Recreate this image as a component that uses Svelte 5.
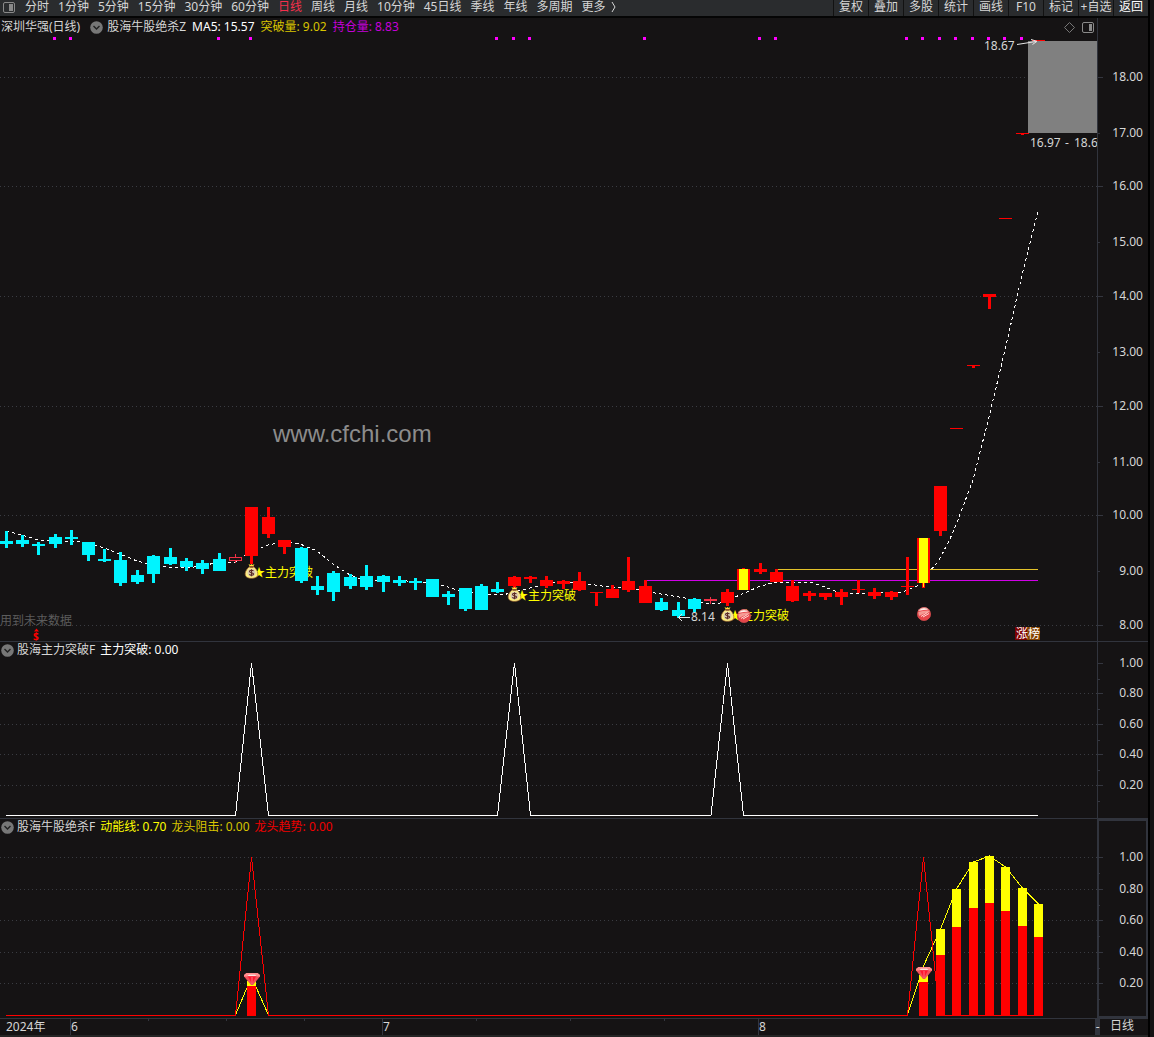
<script>
  const periods = [
    "分时", "1分钟", "5分钟", "15分钟", "30分钟", "60分钟", "日线", "周线",
    "月线", "10分钟", "45日线", "季线", "年线", "多周期", "更多",
  ];
  const tools = ["复权", "叠加", "多股", "统计", "画线", "F10", "标记", "+自选", "返回"];

  let period = $state("日线");

  // kind, body top, body bottom, wick top, wick bottom
  // c = cyan, r = red, y = breakout, h = hollow, x = thin cross
  const candles = [
    ["c", 541, 544, 531, 548], ["c", 540, 544, 535, 547],
    ["c", 544, 546, 542, 555], ["c", 537, 544, 534, 548],
    ["c", 537, 539, 530, 545], ["c", 542, 555, 542, 561],
    ["c", 559, 561, 549, 562], ["c", 560, 583, 552, 586],
    ["c", 575, 582, 570, 584], ["c", 556, 574, 555, 583],
    ["c", 557, 564, 548, 565], ["c", 561, 567, 558, 571],
    ["c", 563, 569, 560, 574], ["c", 559, 571, 553, 571],
    ["h", 557, 561, 554, 563], ["r", 507, 556, 507, 564],
    ["r", 517, 534, 507, 538], ["r", 540, 547, 540, 554],
    ["c", 548, 581, 547, 583], ["c", 586, 590, 576, 595],
    ["c", 573, 592, 571, 601], ["c", 577, 586, 574, 589],
    ["c", 576, 587, 565, 590], ["c", 576, 582, 575, 592],
    ["c", 580, 583, 576, 586], ["c", 581, 583, 578, 590],
    ["c", 579, 597, 579, 597], ["c", 594, 597, 591, 605],
    ["c", 588, 609, 588, 611], ["c", 586, 610, 584, 610],
    ["c", 589, 592, 582, 593], ["r", 577, 586, 576, 590],
    ["r", 577, 579, 576, 583], ["r", 580, 586, 576, 588],
    ["r", 581, 584, 580, 589], ["r", 581, 590, 572, 591],
    ["r", 592, 593, 592, 606], ["r", 589, 598, 585, 598],
    ["r", 581, 590, 557, 592], ["r", 586, 603, 580, 603],
    ["c", 602, 610, 598, 611], ["c", 610, 616, 602, 618],
    ["c", 599, 609, 598, 612], ["x", 599, 601, 597, 604],
    ["r", 592, 603, 589, 606], ["y", 569, 590, 568, 590],
    ["r", 569, 572, 563, 574], ["r", 572, 582, 569, 582],
    ["r", 586, 601, 580, 602], ["r", 593, 596, 591, 601],
    ["r", 593, 597, 593, 600], ["r", 592, 597, 589, 605],
    ["r", 589, 590, 580, 593], ["r", 592, 596, 588, 599],
    ["r", 592, 597, 591, 600], ["r", 586, 587, 557, 595],
    ["y", 538, 583, 538, 588], ["r", 486, 531, 486, 536],
    ["r", 428, 429, 428, 429], ["r", 365, 366, 365, 368],
    ["r", 294, 297, 294, 309], ["r", 218, 219, 218, 219],
    ["r", 133, 134, 133, 135], ["r", 40, 41, 40, 41],
  ];

  const ma5 =
    "6,531 22,535 38,540 55,541 71,541 88,543 104,548 120,554 137,561 153,565 " +
    "169,567 186,568 202,566 219,562 235,562 251,552 268,545 284,542 300,544 317,551 " +
    "333,564 350,575 366,581 399,580 415,582 432,583 448,587 464,592 481,594 503,595 " +
    "521,590 535,587 553,583 575,582 587,584 610,587 635,589 655,593 685,598 705,603 " +
    "720,603 740,595 758,587 775,582 810,582 822,586 838,592 857,594 880,593 903,592 " +
    "917,586 928,573 938,562 949,541 956,525 973,480 989,417 1005,350 1022,275 1038,211";

  const marks = [3, 4, 13, 15, 30, 31, 32, 39, 46, 47, 55, 56, 57, 58, 59, 60, 61, 62];
  const signals = [[15, 572], [31, 595], [44, 615]];
  const balls = [[45, 615], [56, 613]];

  const priceScale = [
    ["18.00", 77], ["17.00", 133], ["16.00", 186], ["15.00", 242],
    ["14.00", 296], ["13.00", 352], ["12.00", 406], ["11.00", 462],
    ["10.00", 515], ["9.00", 571], ["8.00", 625],
  ];
  const breakScale = [
    ["1.00", 663], ["0.80", 693], ["0.60", 724], ["0.40", 754], ["0.20", 785],
  ];
  const energyScale = [
    ["1.00", 857], ["0.80", 889], ["0.60", 920], ["0.40", 952], ["0.20", 983],
  ];

  // candle index, yellow top, red top
  const energy = [
    [15, 981, 986], [56, 975, 982], [57, 929, 955], [58, 889, 927],
    [59, 862, 908], [60, 856, 903], [61, 867, 911], [62, 888, 926],
    [63, 904, 937],
  ];
  const months = [["6", 70], ["7", 382], ["8", 758]];
  const weeks = [148, 226, 304, 476, 570, 664];

  const cx = (i) => Math.floor(6.1 + i * 16.39);
  const fill = (kind) =>
    kind === "c" ? "#00f4ff" : kind === "x" ? "#f23045" : "#ff0000";
</script>

{#snippet chevron(label)}
  <button class="fold" aria-label={label}>
    <svg width="13" height="13" viewBox="0 0 13 13">
      <circle cx="6.5" cy="6.5" r="6.3" fill="#777" />
      <path d="M3.5 5l3 3 3-3" fill="none" stroke="#222" stroke-width="1.4" />
    </svg>
  </button>
{/snippet}

{#snippet bag(x, y)}
  <g transform="translate({x},{y})">
    <path d="M-3-8L-1-7 0-8 1-7 3-8 1.5-5h-3z" fill="#ffe13a" />
    <path
      d="M-1.8-5.5h3.6C4-4 6.3-1 6.3 1.7 6.3 5 3.8 6.3 0 6.3S-6.3 5-6.3 1.7C-6.3-1-4-4-1.8-5.5z"
      fill="#f7e88a"
      stroke="#a0642a"
      stroke-width=".7"
    />
    <path d="M-2-5h4" stroke="#7a3a1a" stroke-width="1.4" />
    <path d="M-4.6 2.5C-3.6 5.4 3.4 5.4 4.8 2" fill="none" stroke="#fff27a" stroke-width="1.6" />
    <circle cy="0.7" r="3.8" fill="#d9c9b0" />
    <path
      d="M2-1C1-2.2-2-2-2-.6-2 1 2.1.4 2.1 2 2.1 3.6-1 3.8-2.2 2.4M0-2.8v7"
      fill="none"
      stroke="#5c2a22"
      stroke-width="1.1"
    />
  </g>
{/snippet}

{#snippet gem(x, y)}
  <g transform="translate({x},{y})">
    <path d="M-5.500-6H5.500L8-4V-2.500L1 6H-1L-8-2.500V-4z" fill="#f0505a" />
    <path d="M-5.500-6H5.500L8-4V-2.500H5L3-4.600H-3L-5-2.500H-8V-4z" fill="#ff8f8f" />
    <path d="M-4.500-3L-3-4.600H3L4.500-3z" fill="#ffe4e0" />
    <path d="M-4-2.600H4L0 5z" fill="#ff1730" />
    <path d="M0-2v7" stroke="#ff8c90" stroke-width=".8" />
  </g>
{/snippet}

{#snippet axis(scale, offset, height)}
  <svg class="axis" width="100%" {height}>
    <g transform="translate(0,{-offset})">
      {#each scale as [label, y], i}
        <rect x="0" {y} width={scale === priceScale && i % 2 ? 2 : 5} height="1" fill="#34363f" />
        <text x="45" y={y + 4} text-anchor="end">{label}</text>
        {#if scale !== priceScale}
          <rect x="0" y={y + 16} width="2" height="1" fill="#34363f" />
        {/if}
      {/each}
    </g>
  </svg>
{/snippet}

{#snippet gridLine(y)}
  <line class="grid" x1="0" y1={y + 0.5} x2="100%" y2={y + 0.5} />
{/snippet}

<div class="app">
  <div class="window">
    <header>
      <button class="side" aria-label="侧栏">
        <svg width="12" height="11" viewBox="0 0 12 11">
          <rect x=".5" y=".5" width="11" height="10" rx="1.5" fill="none" stroke="#898989" />
          <rect x="6" y="2" width="4" height="7" fill="#898989" />
        </svg>
      </button>
      <nav>
        {#each periods as name}
          <button class:active={period === name} onclick={() => (period = name)}>
            {name}
          </button>
        {/each}
        <svg class="more" width="5" height="12" viewBox="0 0 5 12">
          <path d="M1 1l3 5-3 5" fill="none" stroke="#d6d6d6" />
        </svg>
      </nav>
      <div class="tools">
        {#each tools as name}
          <button>{name}</button>
        {/each}
      </div>
    </header>

    <section class="panel">
      <div class="chart">
        <div class="legend price-legend">
          <span class="stock">深圳华强(日线)</span>
          {@render chevron("收起主图")}
          <span>股海牛股绝杀Z</span>
          <span class="white">MA5: 15.57</span>
          <span class="gold">突破量: 9.02</span>
          <span class="purple">持仓量: 8.83</span>
          <div class="corner">
            <button aria-label="标记">
              <svg width="11" height="11" viewBox="0 0 11 11">
                <path d="M5.5.5l5 5-5 5-5-5z" fill="none" stroke="#777" />
              </svg>
            </button>
            <button aria-label="分栏">
              <svg width="12" height="11" viewBox="0 0 12 11">
                <rect x=".5" y=".5" width="11" height="10" rx="1.5" fill="none" stroke="#8a8a8a" />
                <rect x="7" y="2" width="3" height="7" fill="#8a8a8a" />
              </svg>
            </button>
          </div>
        </div>
        <svg class="plot" width="100%" height="605">
          <g transform="translate(0,-36)">
            {#each priceScale as [, y], i}
              {#if i % 2 === 0}
                {@render gridLine(y)}
              {/if}
            {/each}

            {#each marks as i}
              <rect x={cx(i) - 2} y="37" width="3" height="3" fill="#ff00ff" />
            {/each}

            <text class="watermark" x="273" y="442">www.cfchi.com</text>
            <text class="hint" x="0" y="625">用到未来数据</text>
            <text class="money" x="33" y="640">$</text>
            <path d="M34 631.500l2.500-3 2.500 3z" fill="#ff0000" />

            {#each signals as [i, y]}
              <text class="signal" x={cx(i) + 2} y={y + 5}>★</text>
              <text class="signal" x={cx(i) + 14} y={y + 5}>主力突破</text>
            {/each}

            <polyline class="ma" points={ma5} />
            <rect x="645" y="580" width="393" height="1" fill="#d000e8" />
            <rect x="776" y="569" width="262" height="1" fill="#e3c22a" />

            {#each candles as [kind, top, bottom, high, low], i}
              {@const x = cx(i)}
              {#if kind === "h"}
                <rect {x} y={high} width="1" height={low - high} fill="#f23045" />
                <rect
                  x={x - 5.5} y={top + 0.5} width="12" height={bottom - top - 1}
                  fill="#151314" stroke="#f23045"
                />
              {:else}
                <rect
                  x={kind === "x" ? x : x - 1} y={high}
                  width={kind === "x" ? 1 : 3} height={low - high}
                  fill={fill(kind)}
                />
                <rect x={x - 6} y={top} width="13" height={bottom - top} fill={fill(kind)} />
              {/if}
              {#if kind === "y"}
                <rect x={x - 4} y={top} width="9" height={bottom - top} fill="#ffff00" />
                <rect {x} y={top} width="1" height={low - top - 1} fill="#ffff00" />
              {/if}
            {/each}

            {#each signals as [i, y]}
              {@render bag(cx(i) + 0.5, y)}
            {/each}
            {#each balls as [i, y]}
              <g transform="translate({cx(i) + 1},{y + 1})">
                <circle r="6.800" fill="#e8454a" />
                <path d="M-6-3A6.800 6.800 0 0 1 5-4.500Q0-4.500-6-3z" fill="#fff0ea" />
                <path d="M-6-2Q0-4 5.500-3.500L6-2Q0-1-5 2z" fill="#f59a94" />
                <path d="M-3 2.500L3.500-1.500M-1 3L5-.5" stroke="#ffd9d4" />
                <circle r="6.400" fill="none" stroke="#c94a4a" stroke-width=".8" />
              </g>
            {/each}

            <path class="pointer" d="M678.500 617.500H690M682 614l-3.500 3.500 3.500 3.500" />
            <text x="691" y="621">8.14</text>
            <rect x="1028" y="41" width="69" height="92" fill="#808080" />
            <rect x="1032" y="40" width="13" height="1" fill="#ff0000" />
            <path class="pointer" d="M1017 44.500L1036 41.500M1031 39.500l6 1.800-4.500 3.200" />
            <text x="984" y="50">18.67</text>
            <text y="147">
              <tspan x="1030">16.97</tspan>
              <tspan x="1065">-</tspan>
              <tspan x="1074">18.6</tspan>
            </text>
            <rect x="1015" y="627" width="12" height="13" fill="#7c0000" />
            <rect x="1027" y="627" width="13" height="13" fill="#854200" />
            <text class="rank" x="1016" y="638">涨榜</text>
          </g>
        </svg>
      </div>
      {@render axis(priceScale, 18, 623)}
    </section>

    <section class="panel">
      <div class="chart">
        <div class="legend">
          {@render chevron("收起主力突破")}
          <span>股海主力突破F</span>
          <span class="white">主力突破: 0.00</span>
        </div>
        <svg class="plot" width="100%" height="160">
          <g transform="translate(0,-658)">
            {#each breakScale.slice(1) as [, y]}
              {@render gridLine(y)}
            {/each}
            <polyline
              class="curve"
              stroke="#fff"
              points="6,815.5 235.5,815.5 251.5,663 268.5,815.5 497.5,815.5 514.5,663 530.5,815.5 711,815.5 727.5,663 743.5,815.5 1038,815.5"
            />
          </g>
        </svg>
      </div>
      {@render axis(breakScale, 642, 176)}
    </section>

    <section class="panel selected">
      <div class="chart">
        <div class="legend">
          {@render chevron("收起绝杀")}
          <span>股海牛股绝杀F</span>
          <span class="yellow">动能线: 0.70</span>
          <span class="gold">龙头阻击: 0.00</span>
          <span class="red">龙头趋势: 0.00</span>
        </div>
        <svg class="plot" width="100%" height="183">
          <g transform="translate(0,-835)">
            {#each energyScale as [, y]}
              {@render gridLine(y)}
            {/each}
            <polyline
              class="curve"
              stroke="#ffff00"
              points="235.5,1015 251.5,977 268.5,1015"
            />
            <polyline
              class="curve"
              stroke="#ffff00"
              points="907.5,1015 923.5,966 940.5,929 956.5,889 973.5,862 989.5,856 1005.5,867 1022.5,888 1038.5,904"
            />
            <polyline
              class="curve"
              stroke="#ff0000"
              points="6,1015.5 235.5,1015.5 251.5,857 268.5,1015.5 907.5,1015.5 923.5,857 939.5,1015.5 1038,1015.5"
            />
            {#each energy as [i, top, mid]}
              <rect x={cx(i) - 4} y={top} width="9" height={mid - top} fill="#ffff00" />
              <rect x={cx(i) - 4} y={mid} width="9" height={1016 - mid} fill="#ff0000" />
            {/each}
            {@render gem(252, 979)}
            {@render gem(924, 973)}
          </g>
        </svg>
      </div>
      {@render axis(energyScale, 821, 195)}
    </section>

    <footer>
      <svg class="plot" width="100%" height="16">
        <text x="6" y="12">2024年</text>
        {#each months as [label, x]}
          <rect {x} y="0" width="1" height="16" fill="#34363f" />
          <text x={x + 1} y="12">{label}</text>
        {/each}
        {#each weeks as x}
          <rect {x} y="0" width="1" height="2" fill="#34363f" />
        {/each}
      </svg>
      <button class="shrink" aria-label="缩小">-</button>
      <button class="cycle">日线</button>
    </footer>
    <div class="bottom"></div>
  </div>
  <div class="edge"></div>
</div>

<style>
  :global(body) {
    background: #151314;
  }
  .app {
    display: flex;
    color: #d6d6d6;
    font-family: "Noto Sans", "Noto Sans CJK SC", sans-serif;
    font-size: 12px;
    line-height: 16px;
  }
  .window {
    flex: 1;
    min-width: 0;
  }
  .edge {
    width: 4px;
    border-left: 2px solid #000;
    background: #151314;
  }
  button {
    padding: 0;
    border: 0;
    background: none;
    color: inherit;
    font: inherit;
    white-space: nowrap;
    cursor: pointer;
  }
  svg {
    display: block;
  }
  text {
    fill: #d6d6d6;
  }

  header {
    display: flex;
    height: 16px;
    background: #2a2c2e;
    border-bottom: 2px solid #050505;
  }
  header button {
    height: 14px;
    line-height: 14px;
  }
  .side {
    padding-left: 3px;
    margin-right: 10px;
  }
  nav {
    display: flex;
    flex: 1;
    gap: 9px;
    min-width: 0;
  }
  nav .active {
    color: #f5304c;
  }
  .more {
    margin: 1px 0 0 -4px;
  }
  .tools {
    display: flex;
  }
  .tools button {
    width: 35px;
    height: 16px;
    padding-bottom: 2px;
    border-left: 1px solid #121212;
    box-sizing: border-box;
  }
  .tools button:last-child {
    color: #fff;
  }

  .panel {
    display: grid;
    grid-template-columns: minmax(0, 1fr) 50px;
    border-bottom: 1px solid #31343d;
  }
  .chart {
    min-width: 0;
    border-right: 1px solid #31343d;
  }
  .selected .axis {
    width: 48px;
    border: 2px solid #31343d;
    border-left: 0;
    box-shadow: inset 1px 0 #31343d;
  }
  .legend {
    display: flex;
    align-items: center;
    gap: 5px;
    height: 16px;
    padding-left: 1px;
    white-space: nowrap;
  }
  .legend .fold + span {
    margin-left: -2px;
  }
  .price-legend {
    gap: 6px;
    height: 18px;
  }
  .stock {
    margin-right: 4px;
  }
  .corner {
    display: flex;
    gap: 7px;
    margin-left: auto;
    padding-right: 3px;
  }
  .white {
    color: #fff;
  }
  .gold {
    color: #d8c400;
  }
  .purple {
    color: #c400d8;
  }
  .yellow {
    color: #ffff00;
  }
  .red {
    color: #f00000;
  }

  .grid {
    stroke: #3a3c42;
    stroke-dasharray: 1 3;
    shape-rendering: crispEdges;
  }
  .ma {
    fill: none;
    stroke: #fff;
    stroke-dasharray: 3 3;
    shape-rendering: crispEdges;
  }
  .curve {
    fill: none;
    shape-rendering: crispEdges;
  }
  .pointer {
    fill: none;
    stroke: #e6e6e6;
  }
  .hint {
    fill: #5c5c5c;
  }
  .signal {
    fill: #ffff00;
  }
  .rank {
    fill: #fff;
  }
  .watermark {
    fill: #8c8c8c;
    font-family: "Liberation Sans", Arial, sans-serif;
    font-size: 24px;
  }
  .money {
    fill: #ff0000;
    font-size: 10px;
    font-weight: bold;
  }

  footer {
    display: flex;
    height: 16px;
  }
  .shrink {
    width: 5px;
    background: #31343d;
    line-height: 14px;
  }
  .cycle {
    width: 50px;
    padding: 0 4px 2px 0;
    line-height: 14px;
  }
  .bottom {
    height: 2px;
    background: #252525;
  }
</style>
